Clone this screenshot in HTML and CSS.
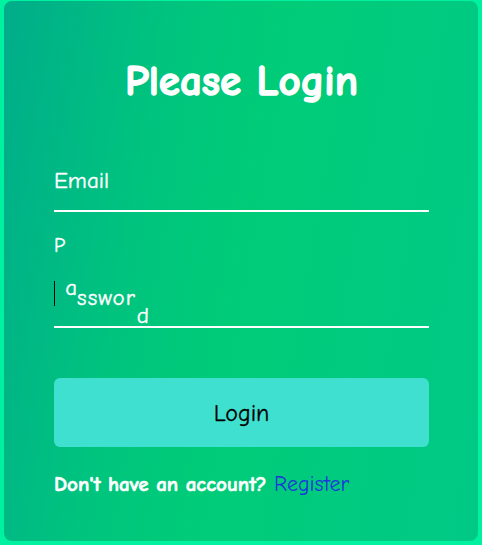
FILE: index.html
```html
<!DOCTYPE html>
<html lang="en">
<head>
<meta charset="utf-8">
<title>Please Login</title>
<link rel="stylesheet" href="styles.css">
</head>
<body>
<div class="card">
  <h1 class="title">Please Login</h1>
  <form class="form">
    <div class="field">
      <input type="email" class="input" aria-label="Email">
      <label class="label"><span class="ch">Email</span></label>
    </div>
    <div class="field field-pw">
      <input type="password" class="input" aria-label="Password">
      <span class="caret"></span>
      <label class="label"><span class="ch ch-p">P</span><span class="ch ch-a">a</span><span class="ch ch-s">sswor</span><span class="ch ch-d">d</span></label>
    </div>
    <button type="button" class="btn">Login</button>
    <p class="note">Don't have an account? <a class="link" href="#">Register</a></p>
  </form>
</div>
</body>
</html>
```

FILE: styles.css
```css
* { box-sizing: border-box; }
html, body { margin: 0; padding: 0; }
body {
  background: #00f2a0;
  padding: 1px 4px 4px;
  font-family: "Comic Sans MS", "Comic Neue", "Chalkboard SE", "DejaVu Sans", sans-serif;
}
.card {
  height: 540px;
  border-radius: 8px;
  background: linear-gradient(100deg, #00ad8a 0%, #00c47e 30%, #00cc78 50%, #00c986 100%);
  padding: 0 49px 0 50px;
  overflow: hidden;
}
.title {
  margin: 56px 0 0;
  text-align: center;
  color: #fff;
  font-size: 43px;
  line-height: 48px;
  font-weight: bold;
  -webkit-text-stroke: 1.4px #fff;
}
.form {
  margin-top: 59px;
}
.field {
  position: relative;
  height: 48px;
}
.field-pw { margin-top: 68px; }
.input {
  display: block;
  width: 100%;
  height: 48px;
  padding: 0;
  border: 0;
  border-bottom: 2px solid #fff;
  background: transparent;
  outline: none;
  font: inherit;
  font-size: 18px;
  color: #fff;
}
.label {
  position: absolute;
  left: 0;
  top: 1px;
  line-height: 32px;
  font-size: 23px;
  color: #fff;
  pointer-events: none;
  white-space: nowrap;
  -webkit-text-stroke: 0.4px #fff;
}
.ch { display: inline-block; }
.ch-p { font-size: 20px; transform: translateY(-52px); }
.ch-a { transform: translateY(-9px); }
.ch-s { letter-spacing: 1px; transform: translateY(1px); }
.ch-d { transform: translateY(19px); margin-left: 1px; }
.caret {
  position: absolute;
  left: 0;
  top: 1px;
  width: 1px;
  height: 25px;
  background: #000;
}
.btn {
  display: block;
  width: 100%;
  height: 69px;
  margin-top: 50px;
  border: 0;
  border-radius: 6px;
  background: #40e0d0;
  color: #000;
  font: inherit;
  font-size: 24px;
  -webkit-text-stroke: 0.3px #000;
}
.note {
  margin: 25px 0 0;
  color: #fff;
  font-size: 21px;
  font-weight: bold;
  line-height: 24px;
  -webkit-text-stroke: 0.6px #fff;
}
.link {
  color: #1d35dd;
  font-size: 22px;
  font-weight: normal;
  text-decoration: none;
  -webkit-text-stroke: 0;
}
```
